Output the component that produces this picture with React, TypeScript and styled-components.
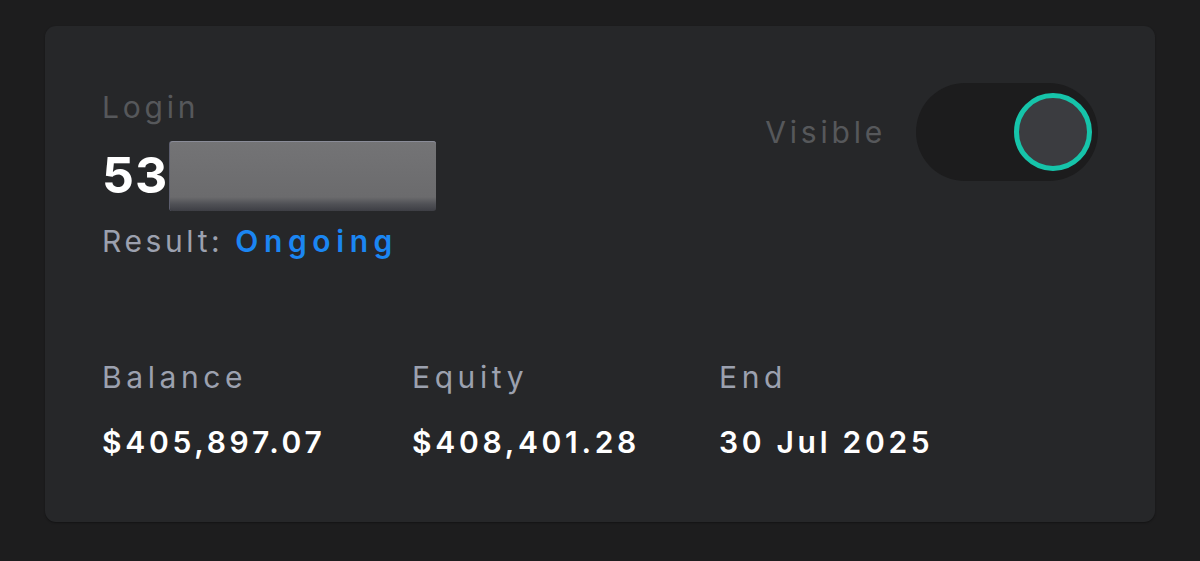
import React from "react";
import styled, { createGlobalStyle } from "styled-components";

const Global = createGlobalStyle`
  html, body { margin: 0; padding: 0; background: #1d1d1e; }
  body { font-family: "Inter", "Noto Sans", sans-serif; }
`;

const Page = styled.div`
  width: 1200px;
  height: 561px;
  box-sizing: border-box;
  padding: 26px 45px 39px 45px;
  background: #1d1d1e;
`;

const Card = styled.div`
  height: 100%;
  box-sizing: border-box;
  background: #262729;
  border-radius: 11px;
  padding: 63px 57px 0 57px;
  display: flex;
  flex-direction: column;
  box-shadow: 0 1px 2px rgba(0, 0, 0, 0.35);
`;

const Top = styled.div`
  display: flex;
  justify-content: space-between;
  align-items: flex-start;
`;

const LoginBlock = styled.div`
  display: flex;
  flex-direction: column;
`;

const Label = styled.div<{ $dim?: boolean }>`
  font-size: 30px;
  line-height: 36px;
  letter-spacing: ${(p) => (p.$dim ? "3.8px" : "4.6px")};
  color: ${(p) => (p.$dim ? "#56585b" : "#9ca1af")};
  font-weight: 400;
`;

const LoginRow = styled.div`
  display: flex;
  align-items: center;
  height: 72px;
  margin-top: 14px;
`;

const LoginNumber = styled.span`
  font-size: 50px;
  font-weight: 700;
  color: #ffffff;
  letter-spacing: 1px;
  line-height: 1;
`;

const Redact = styled.div`
  width: 266px;
  height: 70px;
  margin-left: 2px;
  margin-top: 2px;
  border-radius: 3px;
  background: linear-gradient(180deg, #747476 0%, #6b6b6d 80%, #505156 90%, #3d3e44 100%);
  box-shadow: inset 0 1px 0 #8a8c98, -1px 0 0 #5c5e6e;
`;

const ResultRow = styled.div`
  margin-top: 10px;
  font-size: 30px;
  line-height: 40px;
  letter-spacing: 3.6px;
  color: #9ca1af;
`;

const Ongoing = styled.span`
  color: #1b86f2;
  font-weight: 600;
  letter-spacing: 5.6px;
`;

const VisibleGroup = styled.div`
  display: flex;
  align-items: center;
  gap: 30px;
  margin-top: -6px;
`;

const Track = styled.div`
  width: 182px;
  height: 98px;
  border-radius: 49px;
  background: #1c1c1d;
  display: flex;
  align-items: center;
  justify-content: flex-end;
  padding-right: 6px;
  box-sizing: border-box;
`;

const Knob = styled.div`
  width: 78px;
  height: 78px;
  border-radius: 50%;
  box-sizing: border-box;
  border: 5px solid #16c4aa;
  background: #3b3c40;
`;

const Stats = styled.div`
  display: grid;
  grid-template-columns: 310px 307px 1fr;
  margin-top: 98px;
`;

const Stat = styled.div`
  display: flex;
  flex-direction: column;
  gap: 29px;
`;

const Value = styled.div`
  font-size: 30px;
  line-height: 36px;
  font-weight: 600;
  letter-spacing: 3.7px;
  color: #ffffff;
`;

const stats = [
  { label: "Balance", value: "$405,897.07" },
  { label: "Equity", value: "$408,401.28" },
  { label: "End", value: "30 Jul 2025" },
];

export default function App() {
  return (
    <>
      <Global />
      <Page>
        <Card>
          <Top>
            <LoginBlock>
              <Label $dim>Login</Label>
              <LoginRow>
                <LoginNumber>53</LoginNumber>
                <Redact />
              </LoginRow>
              <ResultRow>
                Result: <Ongoing>Ongoing</Ongoing>
              </ResultRow>
            </LoginBlock>
            <VisibleGroup>
              <Label $dim>Visible</Label>
              <Track>
                <Knob />
              </Track>
            </VisibleGroup>
          </Top>
          <Stats>
            {stats.map((s) => (
              <Stat key={s.label}>
                <Label>{s.label}</Label>
                <Value>{s.value}</Value>
              </Stat>
            ))}
          </Stats>
        </Card>
      </Page>
    </>
  );
}
